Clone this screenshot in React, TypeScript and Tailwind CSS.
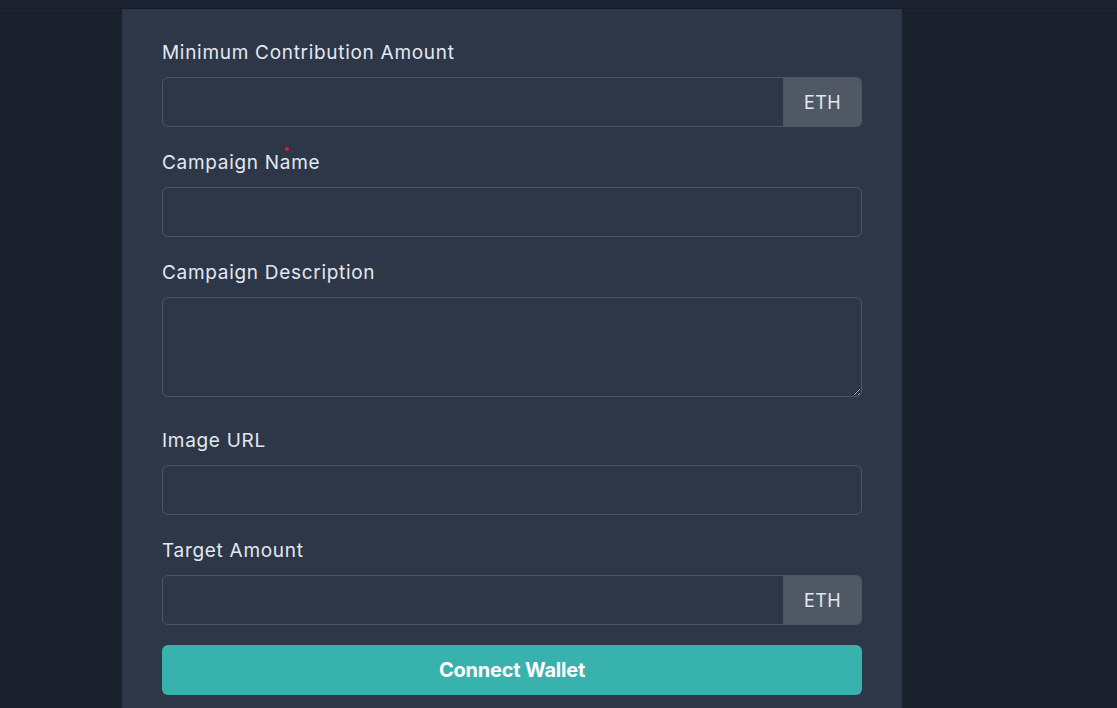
import React from "react";

const font = { fontFamily: '"Inter", "Liberation Sans", sans-serif' };

function Label({ children }: { children: React.ReactNode }) {
  return (
    <label className="block text-[19px] leading-[27px] text-[#e2e8f0] mb-[11px] tracking-[0.7px]">
      {children}
    </label>
  );
}

function InputEth() {
  return (
    <div className="flex h-[50px] w-full">
      <input className="flex-1 min-w-0 h-full bg-transparent border border-[#4a5568] rounded-l-md px-4 text-[#e2e8f0] outline-none" />
      <div className="w-[78px] h-full flex items-center justify-center bg-[#505866] border border-l-0 border-[#4a5568] rounded-r-md text-[18px] text-[#e2e8f0] tracking-[0.4px]">
        ETH
      </div>
    </div>
  );
}

function Input() {
  return (
    <input className="block w-full h-[50px] bg-transparent border border-[#4a5568] rounded-md px-4 text-[#e2e8f0] outline-none" />
  );
}

export default function App() {
  return (
    <div className="min-h-[708px] w-[1117px] bg-[#1a202c] overflow-hidden" style={font}>
      <div className="h-[9px] bg-[#1c2333] border-b border-[#161b25]" />
      <div className="flex">
        <div className="ml-[122px] w-[780px] bg-[#2d3748] px-10 pt-[30px] pb-10">
          <div className="mb-[22px]">
            <Label>Minimum Contribution Amount</Label>
            <InputEth />
          </div>
          <div className="mb-[22px] relative">
            <span className="absolute left-[123px] top-[-2px] w-[4px] h-[4px] rounded-full bg-[#e11d1d]" />
            <Label>Campaign Name</Label>
            <Input />
          </div>
          <div className="mb-[30px]">
            <Label>Campaign Description</Label>
            <textarea className="block w-full h-[100px] bg-transparent border border-[#4a5568] rounded-md px-4 py-2 text-[#e2e8f0] outline-none" />
          </div>
          <div className="mb-[22px]">
            <Label>Image URL</Label>
            <Input />
          </div>
          <div className="mb-[20px]">
            <Label>Target Amount</Label>
            <InputEth />
          </div>
          <button className="w-full h-[50px] rounded-md bg-[#38b2ac] text-white font-bold text-[20px] tracking-[-0.2px]">
            Connect Wallet
          </button>
        </div>
      </div>
    </div>
  );
}
